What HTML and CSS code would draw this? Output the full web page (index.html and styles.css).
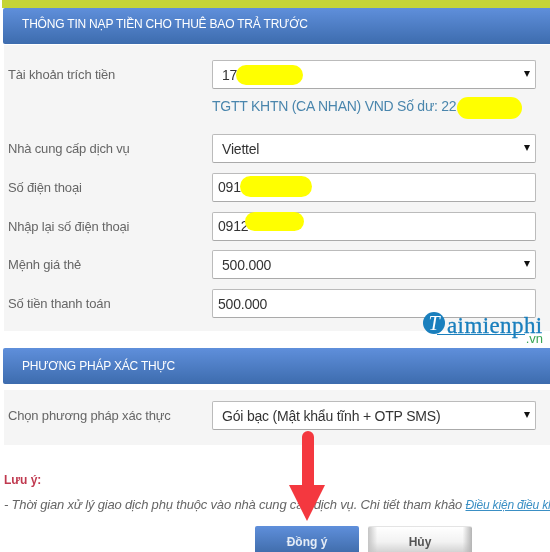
FILE: index.html

```html
<!DOCTYPE html>
<html lang="vi">
<head>
    <meta charset="UTF-8">
    <meta name="viewport" content="width=device-width, initial-scale=1.0">
    <title>Nạp tiền cho thuê bao trả trước</title>
    <link rel="stylesheet" href="styles.css">
</head>
<body>

<div class="pagina">
    <!-- Thông tin nạp tiền -->
    <div class="top-bar"></div>
    <h2 class="section-title">THÔNG TIN NẠP TIỀN CHO THUÊ BAO TRẢ TRƯỚC</h2>
    <form class="panel panel-info">
        <div class="row row-account">
            <label>Tài khoản trích tiền</label>
            <div class="select-box"><select><option>17</option></select></div>
        </div>
        <p class="balance">TGTT KHTN (CA NHAN) VND Số dư: 22</p>
        <div class="row">
            <label>Nhà cung cấp dịch vụ</label>
            <div class="select-box"><select><option>Viettel</option></select></div>
        </div>
        <div class="row">
            <label>Số điện thoại</label>
            <input type="text" value="091">
        </div>
        <div class="row">
            <label>Nhập lại số điện thoại</label>
            <input type="text" value="0912">
        </div>
        <div class="row">
            <label>Mệnh giá thẻ</label>
            <div class="select-box"><select><option>500.000</option></select></div>
        </div>
        <div class="row">
            <label>Số tiền thanh toán</label>
            <input type="text" value="500.000">
        </div>
    </form>

    <!-- Phương pháp xác thực -->
    <h2 class="section-title section-title-2">PHƯƠNG PHÁP XÁC THỰC</h2>
    <form class="panel panel-auth">
        <div class="row">
            <label>Chọn phương pháp xác thực</label>
            <div class="select-box"><select><option>Gói bạc (Mật khẩu tĩnh + OTP SMS)</option></select></div>
        </div>
    </form>

    <!-- Lưu ý -->
    <div class="note">
        <p class="note-title">Lưu ý:</p>
        <p class="note-text">- Thời gian xử lý giao dịch phụ thuộc vào nhà cung cấp dịch vụ. Chi tiết tham khảo <a href="#">Điều kiện điều kh</a></p>
    </div>

    <div class="actions">
        <button class="btn btn-ok" type="button">Đồng ý</button>
        <button class="btn btn-cancel" type="button">Hủy</button>
    </div>
</div>

<!-- Vết bôi vàng -->
<span class="mark mark-1"></span>
<span class="mark mark-2"></span>
<span class="mark mark-3"></span>
<span class="mark mark-4"></span>

<!-- Logo -->
<div class="logo">
    <span class="logo-circle">T</span>
    <span class="logo-name">aimienphi</span>
    <span class="logo-line"></span>
    <span class="logo-vn">.vn</span>
</div>

<!-- Mũi tên đỏ -->
<svg class="arrow" width="40" height="92" viewBox="0 0 40 92">
    <path d="M15 6 a6 6 0 0 1 12 0 V54 H38 L20 90 L2 54 H15 Z" fill="#f4383f"/>
</svg>

</body>
</html>
```

FILE: styles.css

```css
/* General */
html, body {
    margin: 0;
    padding: 0;
    height: 552px;
    overflow: hidden;
    background: #fff;
}

body {
    position: relative;
    font-family: 'Liberation Sans', Arial, sans-serif;
    color: #333;
}

.pagina, .mark, .logo, .arrow {
    filter: blur(0.4px);
}

.top-bar {
    height: 8px;
    margin-left: 2px;
    background: #c5d437;
}

/* Section headers */
.section-title {
    margin: 0 0 0 3px;
    height: 36px;
    padding-left: 19px;
    line-height: 32px;
    font-size: 12px;
    letter-spacing: -0.2px;
    font-weight: normal;
    color: #fff;
    border-radius: 2px 0 0 2px;
    background: linear-gradient(#5f8fdb, #3d6cae);
}

.section-title-2 {
    margin-top: 17px;
    line-height: 36px;
}

/* Panels */
.panel {
    margin: 1px 0 0 4px;
    background: #f5f5f5;
    padding: 15px 14px 0 4px;
}

.panel-info {
    height: 271px;
}

.panel-auth {
    margin-top: 6px;
    height: 40px;
    padding-top: 11px;
    padding-bottom: 4px;
}

.row {
    display: grid;
    grid-template-columns: 204px 324px;
    align-items: center;
    margin-bottom: 9.75px;
}

.row-account {
    margin-bottom: 0;
}

.row label {
    font-size: 13px;
    letter-spacing: -0.17px;
    color: #666;
}

.row input, .select-box select {
    display: block;
    width: 100%;
    height: 29px;
    box-sizing: border-box;
    margin: 0;
    border: 1px solid #bbb;
    border-bottom-color: #aaa;
    border-radius: 2px;
    background: #fff;
    font-family: inherit;
    font-size: 14px;
    letter-spacing: -0.2px;
    color: #333;
    padding: 0 0 0 5px;
}

.select-box {
    position: relative;
}

.select-box select {
    appearance: none;
    padding-left: 9px;
}

.select-box::after {
    content: '';
    position: absolute;
    right: 6px;
    top: 11px;
    border-left: 3px solid transparent;
    border-right: 3px solid transparent;
    border-top: 6px solid #111;
}

.balance {
    margin: 0 0 19px 204px;
    height: 26px;
    line-height: 35px;
    font-size: 14px;
    letter-spacing: -0.25px;
    color: #4a86ad;
}

/* Note */
.note {
    margin-top: 28px;
    padding-left: 4px;
    overflow: hidden;
}

.note p {
    margin: 0;
    white-space: nowrap;
}

.note-title {
    font-size: 12px;
    font-weight: bold;
    color: #c0394f;
}

.note-text {
    margin-top: 11px !important;
    line-height: 14px;
    font-size: 13px;
    letter-spacing: -0.18px;
    font-style: italic;
    color: #666;
}

.note-text a {
    font-size: 12px;
    color: #3a8fc4;
}

/* Buttons */
.actions {
    display: flex;
    gap: 9px;
    margin: 14px 0 0 255px;
}

.btn {
    width: 104px;
    height: 34px;
    padding: 0 0 3px;
    border: 0;
    border-radius: 2px;
    font-family: inherit;
    font-size: 12px;
    font-weight: bold;
}

.btn-ok {
    color: #e4ecf6;
    background: linear-gradient(#5f8fdb, #38649f);
}

.btn-cancel {
    color: #555;
    background: linear-gradient(90deg, #c4c4c4, transparent 9%, transparent 91%, #b4b4b4),
        linear-gradient(#fff, #f2f2f2 45%, #bbb);
    border-top: 1px solid #e4e4e4;
}

/* Overlays on the screenshot */
.mark {
    position: absolute;
    background: #ffff00;
    border-radius: 11px;
}

.mark-1 { left: 236px; top: 65px; width: 67px; height: 20px; }
.mark-2 { left: 457px; top: 97px; width: 65px; height: 22px; }
.mark-3 { left: 240px; top: 176px; width: 72px; height: 21px; }
.mark-4 { left: 245px; top: 212px; width: 59px; height: 19px; }

.logo {
    position: absolute;
    left: 423px;
    top: 312px;
    width: 122px;
    height: 32px;
}

.logo-circle {
    position: absolute;
    left: 0;
    top: 0;
    width: 22px;
    height: 22px;
    border-radius: 50%;
    background: #1a7fbd;
    color: #fff;
    font-family: 'Liberation Serif', serif;
    font-style: italic;
    font-size: 20px;
    line-height: 22px;
    text-align: center;
}

.logo-name {
    position: absolute;
    left: 24px;
    top: 4px;
    font-family: 'Liberation Serif', serif;
    font-size: 23px;
    line-height: 19px;
    letter-spacing: 0.4px;
    color: #1a7fbd;
    -webkit-text-stroke: 0.3px #1a7fbd;
}

.logo-line {
    position: absolute;
    left: 14px;
    top: 22px;
    width: 88px;
    height: 1px;
    background: #1a7fbd;
}

.logo-vn {
    position: absolute;
    right: 2px;
    top: 22px;
    font-size: 13px;
    line-height: 9px;
    color: #3aa655;
}

.arrow {
    position: absolute;
    left: 287px;
    top: 431px;
}
```
